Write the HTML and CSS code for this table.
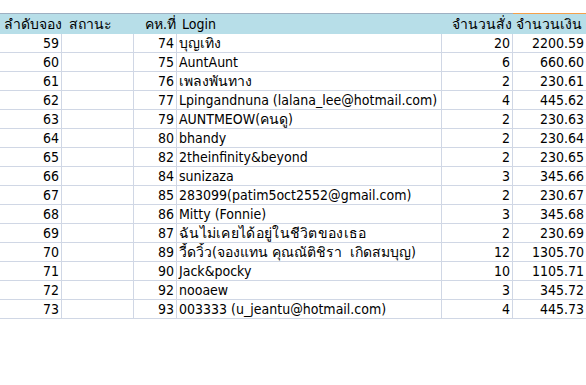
FILE: index.html
```html
<!DOCTYPE html>
<html lang="th">
<head>
<meta charset="utf-8">
<title>Sheet</title>
<link rel="stylesheet" href="styles.css">
</head>
<body>
<table class="sheet">
<colgroup>
<col class="c-a"><col class="c-b"><col class="c-c"><col class="c-d"><col class="c-e"><col class="c-f">
</colgroup>
<thead>
<tr class="head">
<th class="h-left">ลำดับจอง</th>
<th class="h-left h-b">สถานะ</th>
<th class="h-right">คห.ที่</th>
<th class="h-left h-d">Login</th>
<th class="h-right">จำนวนสั่ง</th>
<th class="h-left h-f">จำนวนเงิน</th>
</tr>
</thead>
<tbody>
<tr><td class="num">59</td><td></td><td class="num">74</td><td class="txt">บุญเทิง</td><td class="num">20</td><td class="num">2200.59</td></tr>
<tr><td class="num">60</td><td></td><td class="num">75</td><td class="txt">AuntAunt</td><td class="num">6</td><td class="num">660.60</td></tr>
<tr><td class="num">61</td><td></td><td class="num">76</td><td class="txt">เพลงพันทาง</td><td class="num">2</td><td class="num">230.61</td></tr>
<tr><td class="num">62</td><td></td><td class="num">77</td><td class="txt">Lpingandnuna (lalana_lee@hotmail.com)</td><td class="num">4</td><td class="num">445.62</td></tr>
<tr><td class="num">63</td><td></td><td class="num">79</td><td class="txt">AUNTMEOW(คนดู)</td><td class="num">2</td><td class="num">230.63</td></tr>
<tr><td class="num">64</td><td></td><td class="num">80</td><td class="txt">bhandy</td><td class="num">2</td><td class="num">230.64</td></tr>
<tr><td class="num">65</td><td></td><td class="num">82</td><td class="txt">2theinfinity&amp;beyond</td><td class="num">2</td><td class="num">230.65</td></tr>
<tr><td class="num">66</td><td></td><td class="num">84</td><td class="txt">sunizaza</td><td class="num">3</td><td class="num">345.66</td></tr>
<tr><td class="num">67</td><td></td><td class="num">85</td><td class="txt">283099(patim5oct2552@gmail.com)</td><td class="num">2</td><td class="num">230.67</td></tr>
<tr><td class="num">68</td><td></td><td class="num">86</td><td class="txt">Mitty (Fonnie)</td><td class="num">3</td><td class="num">345.68</td></tr>
<tr><td class="num">69</td><td></td><td class="num">87</td><td class="txt thai">ฉันไม่เคยได้อยู่ในชีวิตของเธอ</td><td class="num">2</td><td class="num">230.69</td></tr>
<tr><td class="num">70</td><td></td><td class="num">89</td><td class="txt">วี้ดวิ้ว(จองแทน คุณณัติชิรา  เกิดสมบุญ)</td><td class="num">12</td><td class="num">1305.70</td></tr>
<tr><td class="num">71</td><td></td><td class="num">90</td><td class="txt">Jack&amp;pocky</td><td class="num">10</td><td class="num">1105.71</td></tr>
<tr><td class="num">72</td><td></td><td class="num">92</td><td class="txt">nooaew</td><td class="num">3</td><td class="num">345.72</td></tr>
<tr><td class="num">73</td><td></td><td class="num">93</td><td class="txt">003333 (u_jeantu@hotmail.com)</td><td class="num">4</td><td class="num">445.73</td></tr>
</tbody>
</table>
</body>
</html>
```
FILE: styles.css
```css
html, body {
  margin: 0;
  padding: 0;
  background: #ffffff;
}
body {
  padding-top: 13px;
  font-family: Tahoma, "DejaVu Sans Condensed", "Noto Sans", sans-serif;
  font-size: 14px;
  color: #000000;
}
.sheet {
  border-collapse: separate;
  border-spacing: 0;
  table-layout: fixed;
  width: 586px;
}
.c-a { width: 62px; }
.c-b { width: 72px; }
.c-c { width: 43px; }
.c-d { width: 265px; }
.c-e { width: 71px; }
.c-f { width: 73px; }

.head th {
  height: 20px;
  padding: 0;
  background: #b7dee8;
  border-top: 1px solid #9eb0c2;
  font-weight: normal;
  white-space: nowrap;
  overflow: hidden;
  line-height: 20px;
  vertical-align: middle;
}
.h-left { text-align: left; padding-left: 4px !important; }
.h-b { padding-left: 7px !important; }
.h-d { padding-left: 5px !important; }
.h-f { padding-left: 3px !important; border-top-color: #f5a04a !important; }
.h-right { text-align: right; padding-right: 1px !important; }

td {
  height: 18px;
  padding: 0 2px;
  border-right: 1px solid #d0d7e5;
  border-bottom: 1px solid #d0d7e5;
  white-space: pre;
  overflow: hidden;
  line-height: 18px;
  vertical-align: bottom;
}
td:last-child { border-right: none; }
.num { text-align: right; padding-right: 2px; }
.txt { text-align: left; padding-left: 2px; }
.thai { letter-spacing: 0.3px; }
```
